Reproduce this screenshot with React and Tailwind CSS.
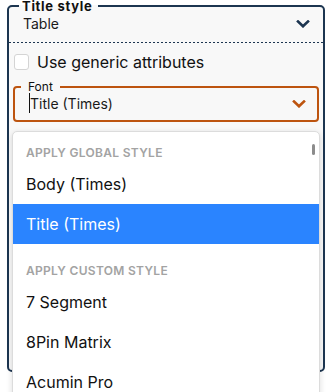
import React from "react";

function Chevron({ color, className }) {
  return (
    <svg className={className} width="14" height="8" viewBox="0 0 14 8" fill="none">
      <path d="M2 1.5 L7 6.3 L12 1.5" stroke={color} strokeWidth="2.6" strokeLinecap="square" />
    </svg>
  );
}

const globalStyles = ["Body (Times)", "Title (Times)"];
const customStyles = ["7 Segment", "8Pin Matrix", "Acumin Pro", "Agency FB"];

export default function App() {
  const selected = "Title (Times)";

  return (
    <div
      className="relative h-[392px] w-[327px] overflow-hidden bg-white"
      style={{ fontFamily: "Inter, 'Noto Sans', sans-serif" }}
    >
      {/* Title style panel */}
      <fieldset className="ml-[7px] h-[372px] w-[318px] rounded-[5px] border-2 border-[#1c3550] bg-[#f8f8f8]">
        <legend className="ml-[10px] px-[3px] pr-[5px] text-[13px] font-bold leading-[12px] tracking-[0.7px] text-[#111]">
          Title style
        </legend>

        <div className="flex items-center justify-between pl-[14px] pr-[13px] pt-[2px] pb-[8px]">
          <span className="text-[14px] leading-[20px] text-[#1a1a1a]">Table</span>
          <Chevron color="#1c3550" />
        </div>
        <div className="h-px bg-[linear-gradient(to_right,#1c3550_50%,transparent_50%)] bg-[length:4px_1px]" />

        {/* checkbox */}
        <label className="flex items-center gap-[8px] pl-[4px] pt-[7px]">
          <span className="ml-px inline-block h-[16px] w-[15px] rounded-[3px] border border-[#d4d4d4] bg-white" />
          <span className="text-[16px] leading-[24px] text-[#111]">Use generic attributes</span>
        </label>

        {/* Font select */}
        <fieldset className="mx-[4px] mt-[7px] rounded-[4px] border-2 border-[#bd540f]">
          <legend className="ml-[6px] px-[7px] text-[12px] leading-[12px] text-[#111]">Font</legend>
          <div className="flex items-center justify-between pl-[14px] pr-[11px] pt-px pb-[6px]">
            <span className="relative text-[14px] leading-[20px] text-[#1a1a1a]">
              <span className="absolute left-0 top-[-1px] h-[20px] w-px bg-[#111]" />
              <span className="pl-px">Title (Times)</span>
            </span>
            <Chevron color="#bd540f" />
          </div>
        </fieldset>
      </fieldset>

      {/* open dropdown */}
      <div className="absolute left-[12px] top-[131px] h-[290px] w-[308px] rounded-t-[5px] border border-[#dcdcdc] bg-white shadow-[0_2px_6px_rgba(0,0,0,0.14)]">
        <div className="absolute right-[4px] top-[12px] h-[11px] w-[3px] rounded-full bg-[#8c8c8c]" />

        <div className="pl-[13px] pt-[13px] pb-[3px] text-[12px] font-semibold leading-[16px] tracking-[0.3px] text-[#a3a3a3]">
          APPLY GLOBAL STYLE
        </div>
        {globalStyles.map((s) => (
          <div
            key={s}
            className={
              s === selected
                ? "flex h-[40px] items-center bg-[#2a84ff] pl-[13px] text-[16px] text-white"
                : "flex h-[40px] items-center pl-[13px] text-[16px] text-[#111]"
            }
          >
            {s}
          </div>
        ))}

        <div className="pl-[13px] pt-[19px] pb-[3px] text-[12px] font-semibold leading-[16px] tracking-[0.3px] text-[#a3a3a3]">
          APPLY CUSTOM STYLE
        </div>
        {customStyles.map((s) => (
          <div key={s} className="flex h-[40px] items-center pl-[13px] text-[16px] text-[#111]">
            {s}
          </div>
        ))}
      </div>
    </div>
  );
}
